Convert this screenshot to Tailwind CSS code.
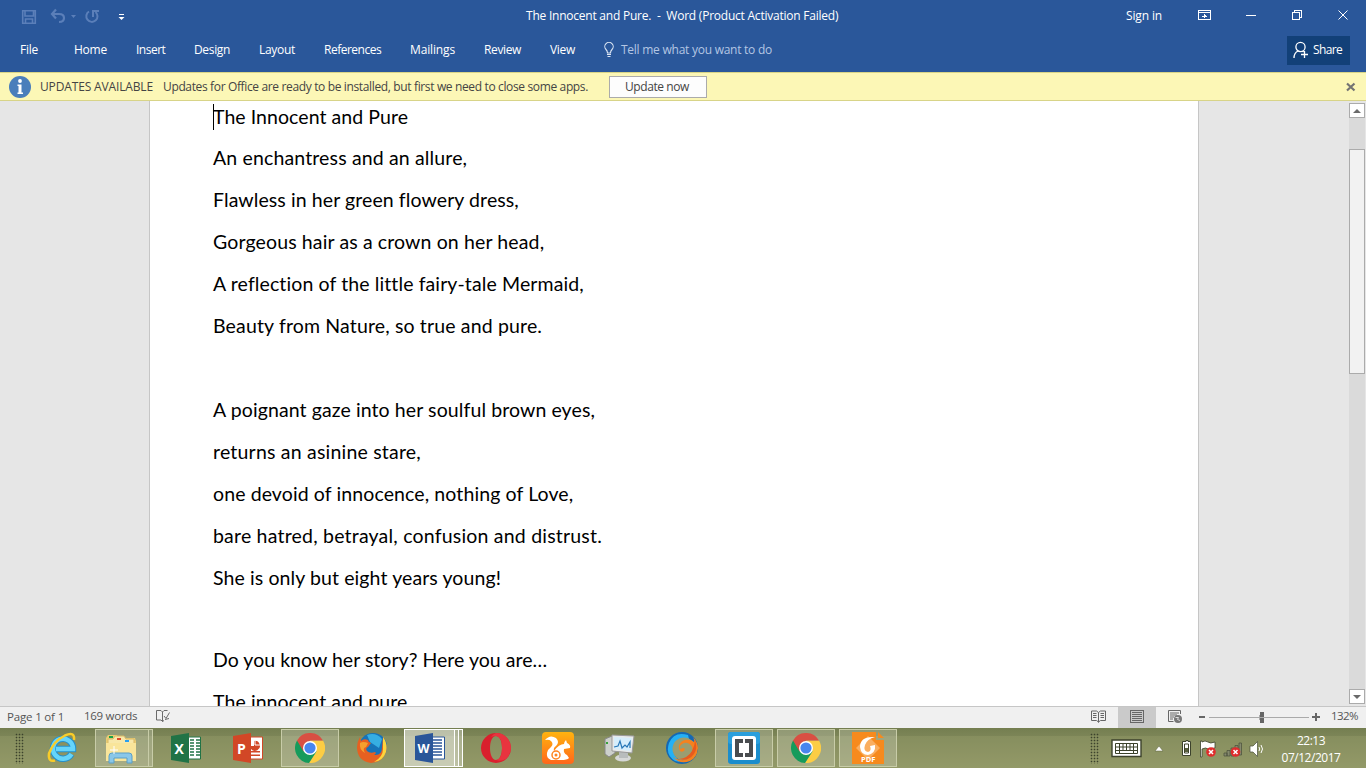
<!DOCTYPE html>
<html lang="en">
<head>
<meta charset="utf-8">
<title>The Innocent and Pure. - Word</title>
<script src="https://cdn.jsdelivr.net/npm/@tailwindcss/browser@4"></script>
</head>
<body class="w-[1366px] h-[768px] overflow-hidden flex flex-col font-['Open_Sans','Noto_Sans',sans-serif] text-[12px] text-white whitespace-nowrap">
<header class="h-[72px] shrink-0 bg-[#2a579a]">
  <div class="h-8 flex items-center relative">
    <svg class="absolute left-0 top-0" width="140" height="32" fill="none" stroke="#5b7fb9" stroke-width="1.6">
      <path d="M22.7 10.7h12.6v12.6h-12.6zM25 11v5h8.500v-5M25.500 23v-4h7v4"/>
      <path d="M56 9.500l-4 4.500 4 4.500M52.500 14h6.500q5 0 5 4t-5 4" stroke-width="2.200"/>
      <path d="M71 15h5l-2.500 3z" fill="#5b7fb9" stroke="none"/>
      <path d="M89 11.500a5.600 5.600 0 1 0 6.500.5M93 17v-6h6" stroke-width="2"/>
      <path d="M119 14.500h5" stroke="#fff" stroke-width="1"/><path d="M118.500 17h6l-3 3z" fill="#fff" stroke="none"/>
    </svg>
    <span class="ml-[526px] w-[313px] whitespace-pre tracking-[-0.23px]">The Innocent and Pure.  -  Word (Product Activation Failed)</span>
    <span class="ml-[287px] tracking-[-0.141px]">Sign in</span>
    <svg class="absolute right-0 top-0" width="180" height="32" fill="none" stroke="#fff" stroke-width="1" shape-rendering="crispEdges">
      <path d="M12.500 10.500h12v9h-12zM12 12.500h12M18.500 18v-4M16 16.500h5M17.500 15.500h2M60 15.500h10M106.500 12.500h7v7h-7zM108.500 12v-1.500h7v7h-2"/>
      <path d="M152.500 10.500l9 9m0-9l-9 9" shape-rendering="auto"/>
    </svg>
  </div>
  <nav class="h-9 flex items-center pl-5">
    <div class="w-[54px] tracking-[-0.248px]">File</div>
    <div class="w-[62px] tracking-[-0.229px]">Home</div>
    <div class="w-[58px] tracking-[-0.5px]">Insert</div>
    <div class="w-[65px] tracking-[-0.345px]">Design</div>
    <div class="w-[65px] tracking-[-0.3px]">Layout</div>
    <div class="w-[86px] tracking-[-0.5px]">References</div>
    <div class="w-[74px] tracking-[-0.143px]">Mailings</div>
    <div class="w-[66px] tracking-[-0.368px]">Review</div>
    <div class="w-[53px] tracking-[-0.305px]">View</div>
    <svg class="mr-[6px] shrink-0" width="12" height="16" fill="none" stroke="#dbe5f3" stroke-width="1.1"><path d="M4.500 11q0-2-1.500-3.500a4.200 4.200 0 1 1 6 0q-1.500 1.500-1.500 3.500zM4 12.500h4M4.500 14.500h3"/></svg>
    <span class="text-[#b4c6e3] tracking-[-0.252px]">Tell me what you want to do</span>
    <div class="ml-auto mr-4 w-[63px] h-[29px] bg-[#124078] flex items-center pl-[6px]">
      <svg class="mr-[5px] shrink-0" width="15" height="18" fill="none" stroke="#fff" stroke-width="1.3"><circle cx="7.500" cy="6" r="4.600"/><path d="M1 17q0-5 4-7M9.500 10l1 1M8 13.500h7M11.500 10v7"/></svg>
      <span class="tracking-[-0.6px]">Share</span>
    </div>
  </nav>
</header>
<section class="h-[29px] shrink-0 bg-[#fcf7b6] border-y border-[#d8d488] text-[#444] flex items-center pl-[9px]">
  <svg class="mr-[9px] shrink-0" width="22" height="22"><circle cx="11" cy="11" r="11" fill="#4a7ebb"/><circle cx="11" cy="5" r="1.900" fill="#fff"/><path d="M8.500 8.500h4v8h1.500v1.500h-5.500v-1.500h1v-6.500h-1z" fill="#fff"/></svg>
  <span class="w-[113px] tracking-[-0.144px]">UPDATES AVAILABLE</span>
  <span class="ml-[10px] w-[425px] tracking-[-0.357px]">Updates for Office are ready to be installed, but first we need to close some apps.</span>
  <div class="ml-[21px] w-[98px] h-[22px] border border-[#ababab] bg-[#fdfdfd] flex items-center pl-[15px] tracking-[-0.411px]">Update now</div>
  <svg class="ml-auto mr-[10px]" width="10" height="10" stroke="#737373" stroke-width="2.200"><path d="M1 1.500l7.500 7m0-7l-7.500 7"/></svg>
</section>
<main class="h-[605px] shrink-0 bg-[#e6e6e6] flex overflow-hidden">
  <article class="ml-[149px] w-[1050px] border-x border-[#c6c6c6] bg-white pl-[63px] relative text-black">
    <div class="absolute left-[63px] top-[3px] w-px h-[26px] bg-black"></div>
    <div class="-mt-[5px] font-['Lato',sans-serif] text-[19.5px] leading-[42px]">
      <p class="h-[41px] tracking-[0.058px]">The Innocent and Pure</p>
      <p class="tracking-[0.145px]">An enchantress and an allure,</p>
      <p class="tracking-[0.09px]">Flawless in her green flowery dress,</p>
      <p class="tracking-[0.125px]">Gorgeous hair as a crown on her head,</p>
      <p class="tracking-[0.11px]">A reflection of the little fairy-tale Mermaid,</p>
      <p class="tracking-[0.15px]">Beauty from Nature, so true and pure.</p>
      <p class="h-[42px]"></p>
      <p class="tracking-[0.098px]">A poignant gaze into her soulful brown eyes,</p>
      <p class="tracking-[0.206px]">returns an asinine stare,</p>
      <p class="tracking-[0.108px]">one devoid of innocence, nothing of Love,</p>
      <p class="tracking-[0.203px]">bare hatred, betrayal, confusion and distrust.</p>
      <p class="tracking-[0.1px]">She is only but eight years young!</p>
      <p class="h-[40px]"></p>
      <p class="tracking-[0.03px]">Do you know her story? Here you are…</p>
      <p class="tracking-[0.09px]">The innocent and pure</p>
    </div>
  </article>
  <div class="ml-auto w-[17px] pt-[2px] pb-[2px] pr-px flex flex-col">
    <div class="h-[15px] shrink-0 border border-[#ababab] bg-white flex items-center justify-center"><svg width="8" height="4"><path d="M0 4l4-4 4 4z" fill="#6a6a6a"/></svg></div>
    <div class="flex-1 bg-[#dadada] pt-[31px]"><div class="h-[225px] bg-[#f2f2f2] border border-[#ababab]"></div></div>
    <div class="h-[15px] shrink-0 border border-[#ababab] bg-white flex items-center justify-center"><svg width="8" height="4"><path d="M0 0h8l-4 4z" fill="#6a6a6a"/></svg></div>
  </div>
</main>
<footer class="h-[22px] shrink-0 bg-[#f0f0f0] border-t border-[#c6c6c6] text-[#555] flex items-center pl-[7px] text-[11.5px]">
  <span class="w-[57px] pb-px tracking-[-0.17px]">Page 1 of 1</span>
  <span class="ml-5 w-[53px] pb-[3px] tracking-[-0.3px]">169 words</span>
  <svg class="ml-[19px] mb-[3px]" width="16" height="14" fill="none" stroke="#6b6b6b"><path d="M6.500 12.500v-9.500l-1.500-1.500h-4.500v9.500h4.500l1.500 1.500 1.500-1M6.500 3l1.500-1.500h3.500M8 7l2 2.500 3.500-6M9 10.500l4-1" /></svg>
  <div class="ml-auto flex items-center h-full">
    <svg class="mr-[12px] mb-[2px]" width="15" height="13" fill="none" stroke="#666"><path d="M7.500 2.500l-2-1.500h-5v9.500h5l2 1.500 2-1.500h5v-9.500h-5zv10M2 3.500h3.500M2 5.500h3.500M2 7.500h3.500M9.500 3.500h3.500M9.500 5.500h3.500M9.500 7.500h3.500"/></svg>
    <div class="w-[38px] h-full bg-[#cacaca] flex items-center justify-center pb-[2px]"><svg width="14" height="13" fill="none" stroke="#666" shape-rendering="crispEdges"><path d="M.5.500h13v12h-13zM2 2.500h10M2 4.500h10M2 6.500h10M2 8.500h10M2 10.500h10"/></svg></div>
    <svg class="ml-[12px] mb-[2px]" width="15" height="14" fill="none" stroke="#666"><path d="M12.500 4v-3.500h-12v11h5M2 3h9M2 5h7M2 7h4M2 9h3"/><circle cx="10" cy="9" r="4" fill="#777" stroke="none"/><path d="M7.500 7.500l3 0-1 2 2.500 1" stroke="#ddd"/></svg>
    <svg class="ml-[15px] mb-[2px]" width="124" height="16" shape-rendering="crispEdges"><path d="M1 7h6v2h-6zM114 7h8v2h-8zM117 4h2v8h-2zM62 3h4v11h-4z" fill="#666"/><path d="M11 8.500h100M61.500 6v5" stroke="#aaa"/></svg>
    <span class="ml-[9px] mr-[8px] w-[27px] pb-[3px] tracking-[-0.55px]">132%</span>
  </div>
</footer>
<div class="h-10 shrink-0 flex bg-linear-to-b from-[#747e50] from-0% via-[#7c8557] via-20% to-[#8f9666] to-100% relative">
  <div class="absolute inset-x-0 top-2 h-8 bg-[#9aa06c]/35"></div>
  <div class="relative w-[31px] pl-[15px] pt-[5px]"><div class="w-[9px] h-[31px] bg-[radial-gradient(circle,#3c422c_.7px,transparent_1.1px)] bg-size-[3px_3px]"></div></div>
  <!-- Internet Explorer -->
  <div class="relative w-[62px] flex items-center justify-center"><svg width="32" height="34" fill="none"><path d="M25.500 23a10 10 0 1 1 1.500-5h-17" stroke="#2590cb" stroke-width="6.500"/><path d="M25.500 23a10 10 0 1 1 1.500-5h-17" stroke="#65d5fb" stroke-width="4.500"/><path d="M28 9q1-9-9-4.500-12 6-16 18-1 9 6 7" stroke="#f8cc29" stroke-width="2.500"/></svg></div>
  <!-- File Explorer -->
  <div class="relative w-[62px] pl-[2px] flex"><div class="w-[54px] my-px border border-[#c8cca8] bg-white/20 flex items-center justify-center pr-[2px]"><svg width="32" height="32"><path d="M1 29V6l2-3h9l1 3h17l1 3v20z" fill="#e8cb73"/><path d="M3 7h5l2-3h9l2 3h8v20H3z" fill="#f8e8a9" stroke="#d9b866"/><path d="M1 11h30v18H1z" fill="#f9e59a"/><path d="M4 4h4v2H4z" fill="#16a34a"/><path d="M12 6h4v2h-4z" fill="#dc4a2a"/><path d="M20 8h4v2h-4z" fill="#2ba0ee"/><path d="M4 31v-7q0-3 3-3h17q3 0 3 3v7h-5v-5H9v5z" fill="#8ac7e8" stroke="#5a9fc7"/><path d="M5 18h8M9 14v8" stroke="#fff" stroke-width="1"/></svg></div><div class="w-[4px] my-px border border-l-0 border-[#c8cca8] bg-white/20"></div></div>
  <!-- Excel -->
  <div class="relative w-[62px] flex items-center justify-center"><svg width="30" height="30"><path d="M17 4h12.500v22H17z" fill="#fff" stroke="#217346"/><path d="M19 7h4M25 7h4M19 10h4M25 10h4M19 13h4M25 13h4M19 16h4M25 16h4M19 19h4M25 19h4M19 22h4M25 22h4" stroke="#217346" stroke-width="1.700"/><path d="M0 3l18-3v30L0 27z" fill="#217346"/><text x="3.500" y="20.500" font-family="Open Sans" font-size="14" font-weight="700" fill="#fff">X</text></svg></div>
  <!-- PowerPoint -->
  <div class="relative w-[62px] flex items-center justify-center"><svg width="30" height="30"><path d="M17 4h12.500v22H17z" fill="#fff" stroke="#d24726"/><path d="M18 16a5 5 0 1 0 3-8v5h-5zM18 18h9v1.500h-9zM18 21.500h9v1.500h-9z" fill="#d24726"/><path d="M22 6v6h6" stroke="#fff" fill="none"/><path d="M0 3l18-3v30L0 27z" fill="#d24726"/><text x="4" y="20.500" font-family="Open Sans" font-size="14" font-weight="700" fill="#fff">P</text></svg></div>
  <!-- Chrome -->
  <div class="relative w-[62px] px-[2px] py-px flex"><div class="flex-1 border border-[#c8cca8] bg-white/20 flex items-center justify-center"><svg width="30" height="30"><path d="M28 7.500A15 15 0 0 1 14 30L21.500 18 15 7.500z" fill="#fccd44"/><path d="M2 7.500A15 15 0 0 0 14 30L21.500 18.500 15 15z" fill="#169b5b"/><path d="M2 7.500A15 15 0 0 1 28 7.500H15l-6.500 11z" fill="#d94f43"/><circle cx="15" cy="15" r="7" fill="#fff"/><circle cx="15" cy="15" r="5.600" fill="#4786ef"/></svg></div></div>
  <!-- Firefox -->
  <div class="relative w-[62px] flex items-center justify-center"><svg width="30" height="30"><circle cx="16" cy="14" r="14" fill="#1673b8"/><path d="M10 2q9-3 15 4l-3 9-9-6z" fill="#36aee2"/><path d="M26 4q5 8 3 15-4 11-15 11Q0 28 0 14q0-5 3-10l1 4q3-3 7-1 0 2 3 3l-3 4q-3 1-1 4 3 3 8 1 2 1-1 3 8 1 8-8z" fill="#e66021"/><path d="M26 4q5 7 3 15-3 9-12 10 9-5 9-13z" fill="#fcd53d"/><path d="M3 10q3-2 8 0l-2 4q-4 1-1 6-6-3-5-10z" fill="#f5a02d"/></svg></div>
  <!-- Word -->
  <div class="relative w-[62px] pl-px pt-px pb-px flex"><div class="w-[51px] border border-white bg-white/50 flex items-center justify-center"><svg width="30" height="30"><path d="M17 4h12.500v22H17z" fill="#fff" stroke="#2a5699"/><path d="M18 7h9M18 10h9M18 13h9M18 16h9M18 19h9M18 22h9" stroke="#2a5699" stroke-width="1.400"/><path d="M0 3l18-3v30L0 27z" fill="#2a5699"/><text x="2.500" y="19.500" font-family="Open Sans" font-size="12.500" font-weight="700" fill="#fff">W</text></svg></div><div class="w-[4px] border border-l-0 border-white bg-white/40"></div><div class="w-[4px] border border-l-0 border-white bg-white/30"></div></div>
  <!-- Opera -->
  <div class="relative w-[62px] flex items-center justify-center"><svg width="30" height="30"><path fill-rule="evenodd" d="M15 0a15 15 0 1 0 0 30 15 15 0 1 0 0-30zm0 3c8 0 8 24 0 24s-8-24 0-24z" fill="#d9202d"/><path fill-rule="evenodd" d="M15 0a15 15 0 0 1 15 15q0 6-5 11-5 3-10 1 6-1 6-12T15 3q-3 0-5 1 2-3 5-4z" fill="#e8343f"/></svg></div>
  <!-- UC Browser -->
  <div class="relative w-[62px] flex items-center justify-center"><svg width="32" height="32"><defs><linearGradient id="uc" x2="0" y2="1"><stop stop-color="#ffb30f"/><stop offset="1" stop-color="#ff671b"/></linearGradient></defs><rect width="32" height="32" rx="4" fill="url(#uc)"/><path d="M3 8q5-6 11-2 4 4 0 8-3 2-2 5 5-7 10-7 0-2 2-4l1 3q4 2 3 5l-6 1q-1 4 3 6l2 3q-2 2-8 2H9q-5-2-4-7 1-4 4-6 3-3 0-6-2-2-6-1z" fill="#fff"/><circle cx="14" cy="23" r="4" fill="none" stroke="#ff8420" stroke-width="1.500"/><circle cx="14" cy="23" r="1.500" fill="#ff8420"/></svg></div>
  <!-- Performance monitor -->
  <div class="relative w-[62px] flex items-center justify-center"><svg width="32" height="30"><path d="M1 6l7-3 3 1v16l-6 4-4-3z" fill="#cdd0cc" stroke="#888"/><path d="M2 9h2v2H2z" fill="#37a33b"/><ellipse cx="19" cy="25" rx="8" ry="3.500" fill="#d6d8d7"/><path d="M15 18h9v7h-9z" fill="#b8bcbc"/><path d="M8 2l22 1-2 17-20-2z" fill="#e8eaea" stroke="#999"/><path d="M10 4l18 1-2 13-16-2z" fill="#d6eefb"/><path d="M10 14l4-1 2-5 2 7 3-3 2 2 3-5v6" fill="none" stroke="#2878b8" stroke-width="1.200"/></svg></div>
  <!-- Phoenix swirl -->
  <div class="relative w-[62px] flex items-center justify-center"><svg width="32" height="32"><circle cx="16" cy="16" r="16" fill="#1468b4"/><path d="M22 3Q8-1 3 11-1 23 9 29l5 1Q2 18 11 9q6-5 12-2z" fill="#25b0f4"/><circle cx="18" cy="17" r="11.500" fill="#9a9d70"/><path d="M26 4q6 6 6 12-1 10-8 13-10 4-17-4 9 6 16 1 5-5 3-11-3-5-8-4-5 2-4 6l3-1q3 0 1 3-4 2-5-2-1-7 6-9 5-1 9 2 1-3-2-6z" fill="#f4821f"/><path d="M29 8q3 8-1 14-6 8-15 5 9-1 13-8 3-6 3-11z" fill="#e85a1e"/></svg></div>
  <!-- Brackets -->
  <div class="relative w-[62px] px-[2px] py-px flex"><div class="flex-1 border border-[#c8cca8] bg-white/20 flex items-center justify-center"><svg width="32" height="32"><rect width="32" height="32" rx="3" fill="#1b8dcc"/><rect width="32" height="12" rx="3" fill="#2a9fdc"/><rect x="4" y="4" width="24" height="24" rx="3" fill="#fff"/><path d="M7 7h8v4h-4v10h4v4H7zM17 7h8v18h-8v-4h4V11h-4z" fill="#494c4f"/></svg></div></div>
  <!-- Chrome, second window -->
  <div class="relative w-[62px] px-[2px] py-px flex"><div class="flex-1 border border-[#c8cca8] bg-white/20 flex items-center justify-center"><svg width="30" height="30"><path d="M28 7.500A15 15 0 0 1 14 30L21.500 18 15 7.500z" fill="#fccd44"/><path d="M2 7.500A15 15 0 0 0 14 30L21.500 18.500 15 15z" fill="#169b5b"/><path d="M2 7.500A15 15 0 0 1 28 7.500H15l-6.500 11z" fill="#d94f43"/><circle cx="15" cy="15" r="7" fill="#fff"/><circle cx="15" cy="15" r="5.600" fill="#4786ef"/></svg></div></div>
  <!-- Foxit PDF -->
  <div class="relative w-[62px] px-[2px] py-px flex"><div class="flex-1 border border-[#c8cca8] bg-white/20 flex items-center justify-center"><svg width="32" height="32"><path d="M0 0h24v8h8v24H0zM26 0l6 6h-6z" fill="#f68a1e"/><path d="M4 16L16 4l12 12-12 12z" fill="#faae60"/><path d="M23 5Q8 4 8 15q1 8 8 8 8-2 7-10l-5 1q2 5-2 6-5-1-3-7 2-6 10-8z" fill="#fff"/><text x="9" y="30" font-family="Open Sans" font-size="7.500" font-weight="700" fill="#fff">PDF</text></svg></div></div>
  <div class="relative ml-auto flex">
    <div class="mt-[5px] w-[9px] h-[31px] bg-[radial-gradient(circle,#3c422c_.7px,transparent_1.1px)] bg-size-[3px_3px]"></div>
    <svg class="ml-[12px]" width="161" height="40">
      <path d="M1 12h29v16.500H1z" fill="#fff" stroke="#3c422c" stroke-width="1.400"/><path d="M4.500 15.500h22v10h-22zM4 19h23M4 22.500h23M8.500 15v8M12 15v8M15.500 15v8M19 15v8M22.500 15v8M8.500 22v4M22.500 22v4" stroke="#3c422c" fill="none"/>
      <path d="M44 23l4-5 4 5z" fill="#fff" stroke="#59603e" stroke-width=".5"/>
      <path d="M73 13.500h2v-1h2v1h2.500v14h-8v-14z" fill="#fff" stroke="#3c422c"/><path d="M73.500 16h4v9h-4z" fill="#fff" stroke="#3c422c"/><path d="M74 20h3v4h-3z" fill="#59603e"/>
      <path d="M89.500 13v16h1.500v-8q4-2 6 0l7-1v-6q-5 2-7 0-3-2-6 0v-1z" fill="#fff" stroke="#3c422c" stroke-width=".8"/><circle cx="100" cy="24" r="4.800" fill="#df2c2c"/><path d="M98 22l4 4m0-4l-4 4" stroke="#fff" stroke-width="1.500"/>
      <path d="M113 25h3v3h-3zM116 22.500h3v5.500h-3zM120 20h3v8h-3zM124 17.500h3v10h-3zM128 15h2.500v12H128z" fill="#85896e" stroke="#484d39" stroke-width=".7"/><circle cx="124.500" cy="24" r="4.800" fill="#df2c2c"/><path d="M122.500 22l4 4m0-4l-4 4" stroke="#fff" stroke-width="1.500"/>
      <path d="M139 18h3l4.500-4.500v15l-4.500-4.500h-3z" fill="#fff" stroke="#484d39" stroke-width=".7"/><path d="M148 19q1.500 2 0 4M150 17q3 4 0 8" fill="none" stroke="#fff"/>
    </svg>
    <div class="w-[94px] pt-[4px] pr-[16px] flex flex-col items-center leading-[17px] tracking-[-0.48px]"><span>22:13</span><span>07/12/2017</span></div>
  </div>
</div>
</body>
</html>
